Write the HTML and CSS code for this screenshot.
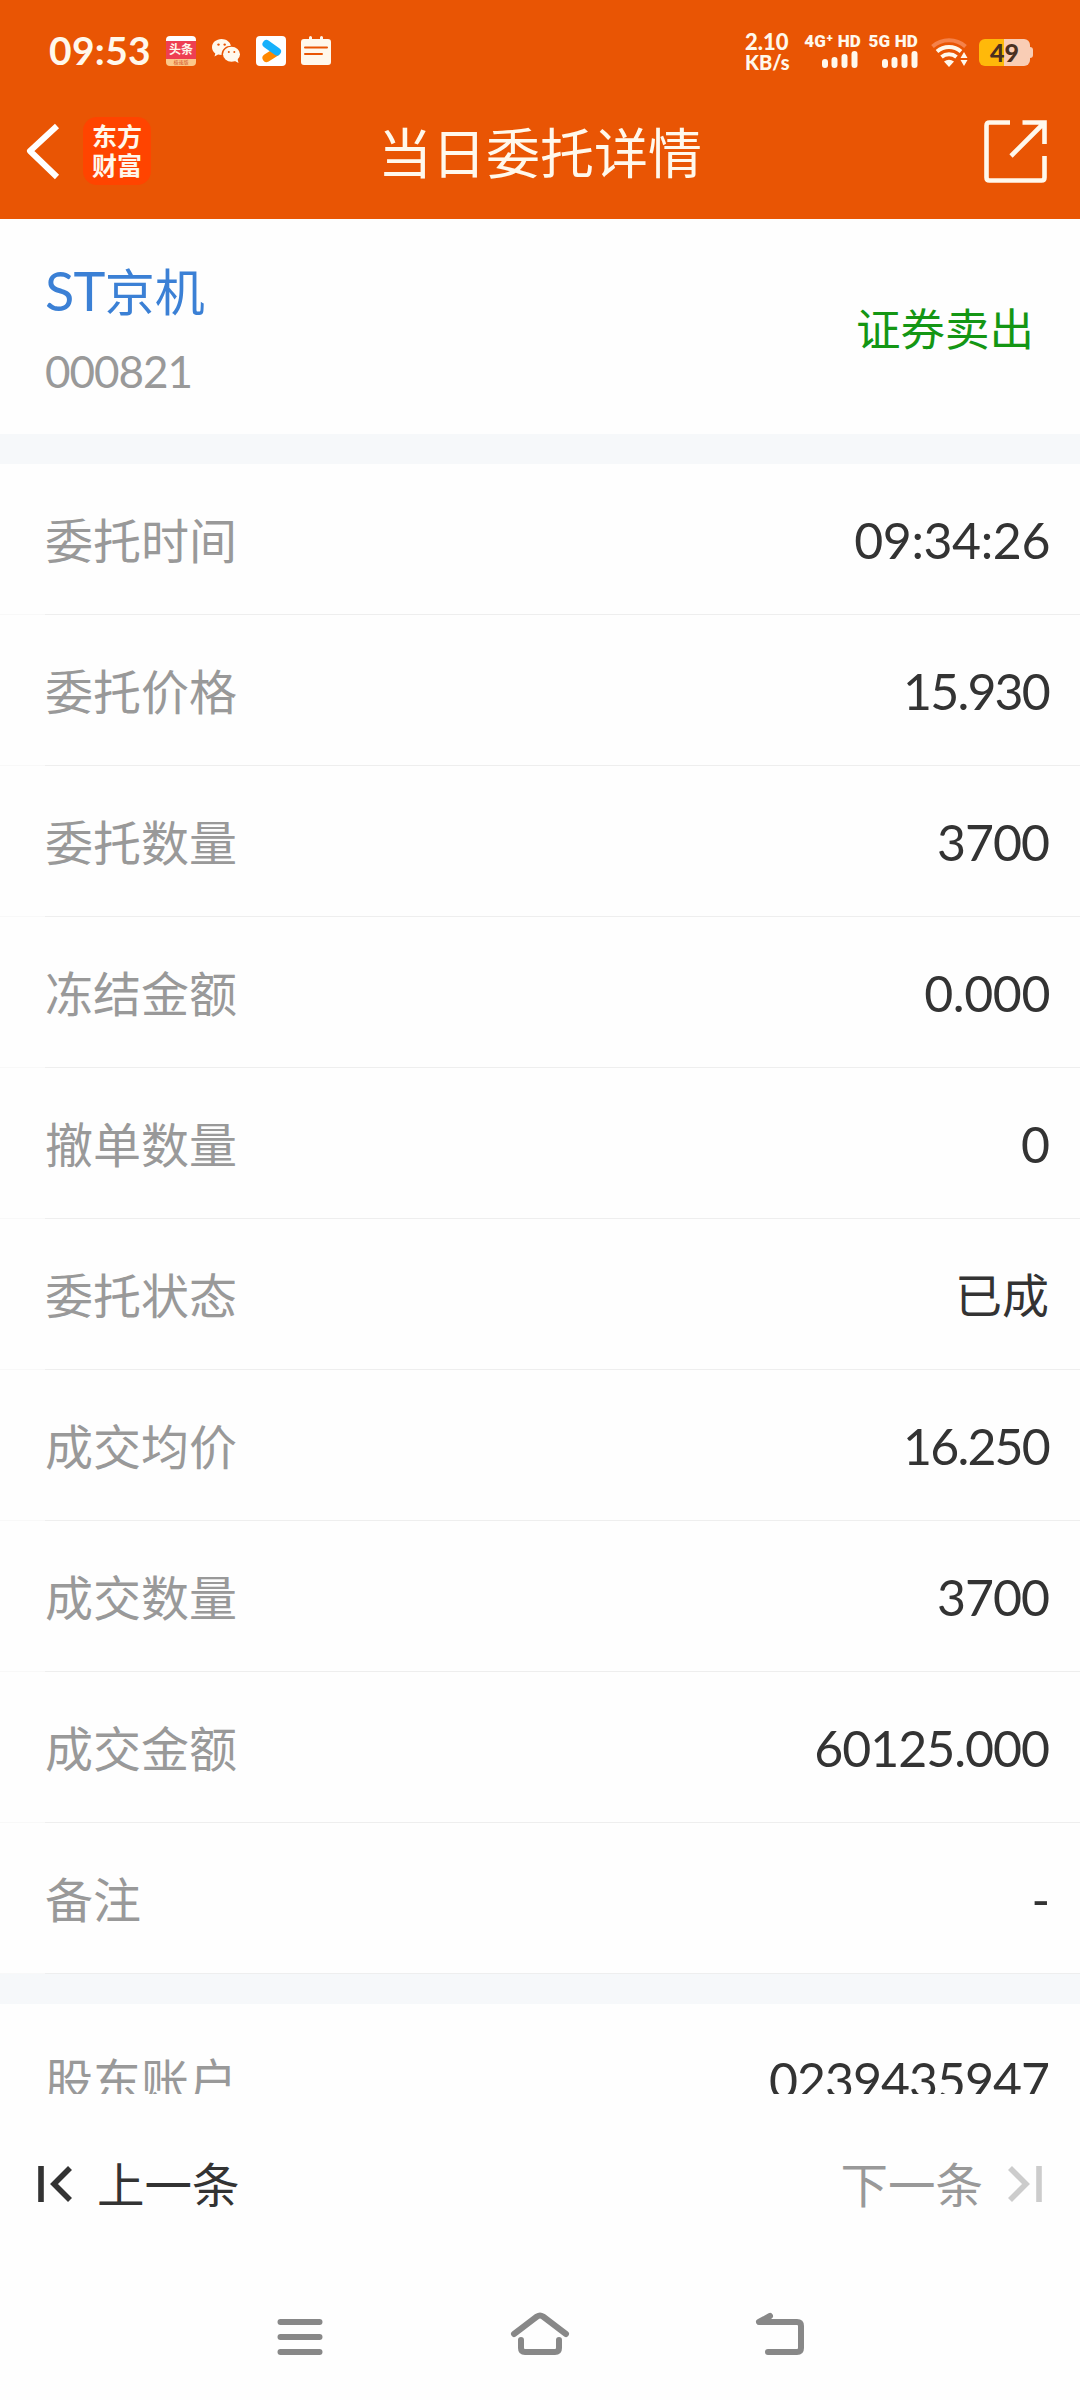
FILE: index.html
```html
<!DOCTYPE html>
<html lang="zh-CN">

<head>
    <meta charset="UTF-8">
    <meta name="viewport" content="width=device-width, initial-scale=1.0">
    <title>当日委托详情</title>
    <link rel="stylesheet" href="styles.css">
</head>

<body>
    <header>
        <div class="status">
            <span class="clock">09:53</span>
            <div class="apps">
                <div class="toutiao"><b>头条</b><i>极速版</i></div>
                <svg class="wechat" width="28" height="24" viewBox="0 0 28 24">
                    <path fill="#fff8ec" d="M9.500 0C4.300 0 0 3.600 0 8.200c0 2.500 1.300 4.700 3.300 6.200L2.500 17.500l3.600-1.900c1.100.3 2.200.5 3.400.5 0-6 4.500-9.300 9.400-9.300C18.200 2.900 14.200 0 9.500 0z" />
                    <ellipse fill="#fff8ec" cx="19.500" cy="15.300" rx="8.500" ry="7.500" />
                    <path fill="#fff8ec" d="M21 21l5.500 3-1-4z" />
                    <g fill="#e95504">
                        <circle cx="6.500" cy="5.600" r="1.200" />
                        <circle cx="12.700" cy="5.600" r="1.200" />
                        <circle cx="16.800" cy="13" r="1" />
                        <circle cx="22.300" cy="13" r="1" />
                    </g>
                </svg>
                <svg class="video" width="30" height="30" viewBox="0 0 30 30">
                    <rect width="30" height="30" rx="4" fill="#fff" />
                    <path d="M10.500 22L20 16" stroke="#f80" stroke-width="8" stroke-linecap="round" />
                    <path d="M10.500 8L21 15.500" stroke="#16b0fb" stroke-width="8" stroke-linecap="round" />
                </svg>
                <svg class="note" width="30" height="30" viewBox="0 0 30 30">
                    <path fill="#fff8ec" d="M3 3h5V1.500a1.500 1.500 0 013 0V3h8V1.500a1.500 1.500 0 013 0V3h5a3 3 0 013 3v20a3 3 0 01-3 3H3a3 3 0 01-3-3V6a3 3 0 013-3z" />
                    <path d="M4 11.500h22M4 18h17" stroke="#e95504" stroke-width="2" stroke-linecap="round" />
                </svg>
            </div>
            <div class="speed"><span>2.10</span><span>KB/s</span></div>
            <div class="sim sim1">
                <span>4G⁺ HD</span>
                <svg width="36" height="17" viewBox="0 0 36 17"><path d="M3 11v3M12.500 9v5M22.500 6v8M32.500 3v11" stroke="#fff8ec" stroke-width="6" stroke-linecap="round" /></svg>
            </div>
            <div class="sim sim2">
                <span>5G HD</span>
                <svg width="36" height="17" viewBox="0 0 36 17"><path d="M3 11v3M12.500 9v5M22.500 6v8M32.500 3v11" stroke="#fff8ec" stroke-width="6" stroke-linecap="round" /></svg>
            </div>
            <svg class="wifi" width="37" height="30" viewBox="0 0 37 30">
                <g fill="none" stroke="#fff8ec" stroke-width="4">
                    <path d="M1.500 9.500a25 25 0 0133 0" stroke="#f5824a" />
                    <path d="M6 14.500a18.500 18.500 0 0124 0" />
                    <path d="M10.500 20a12 12 0 0115 0" />
                </g>
                <path fill="#fff8ec" d="M13 24.500q5-3.500 10 0L18 30z" />
                <path fill="#fff8ec" d="M33 15l3.500 6h-7zM33 29l3.500-6h-7z" />
            </svg>
            <div class="battery"><span>49</span></div>
        </div>
        <div class="titlebar">
            <svg class="back" width="34" height="56" viewBox="0 0 34 56">
                <path d="M31 2L4 27l27 26" fill="none" stroke="#fff" stroke-width="6" stroke-linejoin="round" />
            </svg>
            <div class="logo">东方<br>财富</div>
            <h1>当日委托详情</h1>
            <svg class="share" width="64" height="64" viewBox="0 0 64 64">
                <g fill="none" stroke="#fff8ec" stroke-width="4.600">
                    <path d="M26 2.500H5.500q-3 0-3 3v52q0 3 3 3h52q3 0 3-3V36" />
                    <path d="M38.500 2.500h22V24M60 3L27 36" />
                </g>
            </svg>
        </div>
    </header>

    <section class="stock">
        <div>
            <h2><span>ST</span>京机</h2>
            <p class="num">000821</p>
        </div>
        <strong>证券卖出</strong>
    </section>

    <main>
        <ul>
            <li><span>委托时间</span><b class="wide">09:34:26</b></li>
            <li><span>委托价格</span><b class="narrow">15.930</b></li>
            <li><span>委托数量</span><b>3700</b></li>
            <li><span>冻结金额</span><b class="wide">0.000</b></li>
            <li><span>撤单数量</span><b>0</b></li>
            <li><span>委托状态</span><b class="cn">已成</b></li>
            <li><span>成交均价</span><b class="narrow">16.250</b></li>
            <li><span>成交数量</span><b>3700</b></li>
            <li><span>成交金额</span><b>60125.000</b></li>
            <li><span>备注</span><b>-</b></li>
        </ul>
        <ul>
            <li><span>股东账户</span><b>0239435947</b></li>
        </ul>
    </main>

    <footer>
        <div class="prev">
            <svg width="34" height="36" viewBox="0 0 34 36"><path d="M3 0v36M32 2L16 18l16 16" fill="none" stroke="#333" stroke-width="5.600" /></svg>
            <span>上一条</span>
        </div>
        <div class="next">
            <span>下一条</span>
            <svg width="34" height="36" viewBox="0 0 34 36"><path d="M31 0v36M2 2l16 16L2 34" fill="none" stroke="#ccc" stroke-width="5.600" /></svg>
        </div>
    </footer>

    <nav>
        <svg width="60" height="48" viewBox="0 0 60 48"><path d="M10.500 9h39M10.500 24h39M10.500 39h39" /></svg>
        <svg width="60" height="48" viewBox="0 0 60 48"><path d="M4 21L27 3.500q3-2 6 0L56 21M11 27v8q0 4 4 4h30q4 0 4-4v-8" /></svg>
        <svg width="60" height="48" viewBox="0 0 60 48"><path d="M20 3L9 9h38q4 0 4 4v22q0 4-4 4H18" /></svg>
    </nav>
</body>

</html>
```
FILE: styles.css
```css
* {
    box-sizing: border-box;
}

body {
    margin: 0;
    height: 2400px;
    display: flex;
    flex-direction: column;
    overflow: hidden;
    background-color: #fefefe;
    color: #333;
    font-family: Lato, "Noto Sans CJK SC", sans-serif;
}

svg {
    display: block;
    flex-shrink: 0;
    overflow: visible;
}

header {
    height: 219px;
    background: #e95504;
    color: #fff8ec;
    flex-shrink: 0;
}

.status {
    height: 102px;
    padding: 33px 0 0 49px;
    display: flex;
    align-items: flex-start;
}

.clock {
    width: 117px;
    font-size: 39px;
    line-height: 35px;
    font-weight: bold;
    letter-spacing: 0.3px;
}

.apps {
    display: flex;
    width: 579px;
    padding-top: 3px;
}

.toutiao {
    width: 30px;
    height: 30px;
    border-radius: 4px;
    background: linear-gradient(#fff 0 5px, #ee3f52 5px 23px, #fcc88a 23px);
    overflow: hidden;
    text-align: center;
}

.toutiao b {
    display: block;
    margin-top: 5px;
    font-size: 12px;
    line-height: 18px;
}

.toutiao i {
    display: block;
    font-size: 5px;
    line-height: 7px;
    font-style: normal;
    color: #d4552b;
}

.wechat {
    margin: 3px 16px 0;
}

.note {
    margin-left: 15px;
}

.speed {
    width: 58px;
    display: flex;
    flex-direction: column;
    font-size: 22px;
    font-weight: 900;
    line-height: 18px;
}

.speed span + span {
    font-size: 20px;
    line-height: 22px;
}

.sim {
    display: flex;
    flex-direction: column;
    align-items: flex-end;
    font-family: Roboto, "Noto Sans CJK SC", sans-serif;
    font-size: 17px;
    font-weight: 900;
    line-height: 16px;
    letter-spacing: 0.2px;
    white-space: nowrap;
}

.sim svg {
    margin: 2px 3px 0 0;
}

.sim1 {
    width: 58px;
}

.sim2 {
    width: 57px;
}

.sim2 svg {
    margin-right: 0;
}

.wifi {
    margin: 4px 0 0 13px;
}

.battery {
    width: 51px;
    height: 27px;
    margin: 6px 0 0 11px;
    border-radius: 6px;
    background: linear-gradient(90deg, #ffb90a 50%, #f9cdb5 50%);
    color: #4a3020;
    font-size: 25px;
    font-weight: 900;
    line-height: 27px;
    text-align: center;
    position: relative;
}

.battery::after {
    content: "";
    position: absolute;
    right: -3px;
    top: 8px;
    width: 3px;
    height: 11px;
    border-radius: 0 3px 3px 0;
    background: #f9cdb5;
}

.titlebar {
    display: flex;
    align-items: flex-start;
    padding: 15px 32px 0 26px;
}

.back {
    margin-top: 7px;
}

.logo {
    width: 68px;
    height: 68px;
    margin-left: 23px;
    padding-top: 4px;
    border-radius: 14px;
    background: #ff4400;
    font-family: "Noto Sans CJK SC", sans-serif;
    font-size: 25px;
    font-weight: bold;
    line-height: 29px;
    text-align: center;
}

h1 {
    flex: 1;
    margin: 0;
    padding-left: 227px;
    font-size: 54px;
    line-height: 74px;
    font-weight: normal;
    white-space: nowrap;
}

.share {
    margin-top: 3px;
}

.stock {
    height: 215px;
    padding: 0 46px 0 45px;
    display: flex;
    justify-content: space-between;
    flex-shrink: 0;
}

.stock h2 {
    margin: 36px 0 0;
    font-size: 50px;
    line-height: 72px;
    font-weight: normal;
    color: #3b80d5;
}

.stock h2 span {
    font-size: 54px;
    letter-spacing: -0.7px;
}

.num {
    margin: 16px 0 0;
    font-size: 44px;
    line-height: 54px;
    letter-spacing: -1px;
    color: #999;
}

.stock strong {
    margin-top: 74px;
    font-size: 44.500px;
    line-height: 72px;
    font-weight: normal;
    color: #149614;
}

main {
    height: 1660px;
    overflow: hidden;
    flex-shrink: 0;
}

ul {
    margin: 0;
    padding: 0;
    border-top: 30px solid #f6f8fa;
    list-style-type: none;
}

li {
    height: 151px;
    padding: 0 31px 0 45px;
    display: flex;
    justify-content: space-between;
    background: linear-gradient(90deg, #f8f8f8 45px, #eee 45px) 0 150px / 100% 1px no-repeat;
    font-size: 48px;
    line-height: 153px;
}

li span {
    color: #999;
}

li b {
    font-size: 50px;
    font-weight: normal;
    letter-spacing: -1px;
}

li .wide {
    margin-right: -1px;
    letter-spacing: -0.4px;
}

li .narrow {
    letter-spacing: -1.800px;
}

li .cn {
    font-size: 47px;
    letter-spacing: 0;
}

footer {
    height: 186px;
    padding: 0 38px;
    display: flex;
    justify-content: space-between;
    flex-shrink: 0;
    font-size: 47.500px;
    line-height: 182px;
}

.prev, .next {
    display: flex;
    gap: 25px;
}

.next {
    color: #999;
}

footer svg {
    margin-top: 72px;
}

nav {
    padding: 33px 270px 0;
    display: flex;
    justify-content: space-between;
}

nav path {
    fill: none;
    stroke: #888;
    stroke-width: 6;
    stroke-linecap: round;
    stroke-linejoin: round;
}
```
